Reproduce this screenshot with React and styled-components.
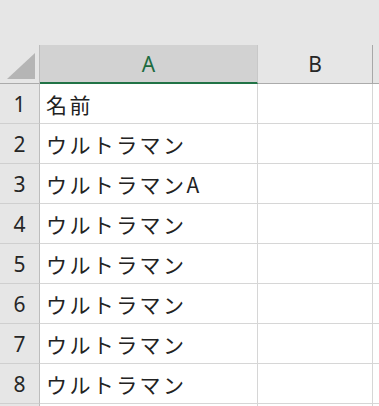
import React from "react";
import styled, { createGlobalStyle } from "styled-components";

const Global = createGlobalStyle`
  html, body { margin: 0; padding: 0; background: #ffffff; overflow: hidden; }
  #root { width: 379px; height: 406px; overflow: hidden; }
`;

const Page = styled.div`
  width: 379px;
  height: 406px;
  display: flex;
  flex-direction: column;
  background: #e6e6e6;
`;

const TopBar = styled.div`
  height: 45px;
  flex: none;
  background: #e6e6e6;
`;

const Grid = styled.div`
  display: grid;
  grid-template-columns: 40px 218px 115px 1fr;
  grid-auto-rows: 40px;
  grid-template-rows: 39px;
  background: #ffffff;
`;

const Corner = styled.div`
  background: #e6e6e6;
  border-right: 1px solid #bdbdbd;
  border-bottom: 1px solid #ababab;
  display: flex;
  align-items: flex-end;
  justify-content: flex-end;
  padding: 0 4px 4px 0;
  box-sizing: border-box;
`;

const ColHead = styled.div`
  box-sizing: border-box;
  background: ${(p) => (p.$active ? "#d2d2d2" : "#e6e6e6")};
  color: ${(p) => (p.$active ? "#1e6b40" : "#262626")};
  border-right: 1px solid ${(p) => (p.$dark ? "#a8a8a8" : "#c8c8c8")};
  border-bottom: ${(p) => (p.$active ? "2px solid #217346" : "1px solid #ababab")};
  display: flex;
  align-items: center;
  justify-content: center;
  font-family: "Noto Sans", "Open Sans", sans-serif;
  font-size: 21px;
  padding-top: ${(p) => (p.$active ? "1px" : "0")};
`;

const RowHead = styled.div`
  box-sizing: border-box;
  background: #e6e6e6;
  color: #262626;
  border-right: 1px solid #bdbdbd;
  border-bottom: 1px solid #cfcfcf;
  display: flex;
  align-items: center;
  justify-content: center;
  font-family: "Noto Sans", "Open Sans", sans-serif;
  font-size: 21px;
`;

const Cell = styled.div`
  box-sizing: border-box;
  background: #ffffff;
  color: #222222;
  border-right: 1px solid #d6d6d6;
  border-bottom: 1px solid #d6d6d6;
  display: flex;
  align-items: center;
  padding-left: 6px;
  white-space: nowrap;
  overflow: hidden;
  font-family: "Noto Sans CJK JP", "Noto Sans", sans-serif;
  font-size: 21px;
  letter-spacing: 2.4px;
`;

const rows = [
  "名前",
  "ウルトラマン",
  "ウルトラマンA",
  "ウルトラマン",
  "ウルトラマン",
  "ウルトラマン",
  "ウルトラマン",
  "ウルトラマン",
];

export default function App() {
  return (
    <>
      <Global />
      <Page>
        <TopBar />
        <Grid>
          <Corner>
            <svg width="28" height="26" viewBox="0 0 28 26">
              <polygon points="0,26 28,0 28,26" fill="#b5b5b5" />
            </svg>
          </Corner>
          <ColHead $active>A</ColHead>
          <ColHead $dark>B</ColHead>
          <ColHead />
          {rows.map((text, i) => (
            <React.Fragment key={i}>
              <RowHead>{i + 1}</RowHead>
              <Cell>{text}</Cell>
              <Cell />
              <Cell />
            </React.Fragment>
          ))}
          <RowHead />
          <Cell />
          <Cell />
          <Cell />
        </Grid>
      </Page>
    </>
  );
}
